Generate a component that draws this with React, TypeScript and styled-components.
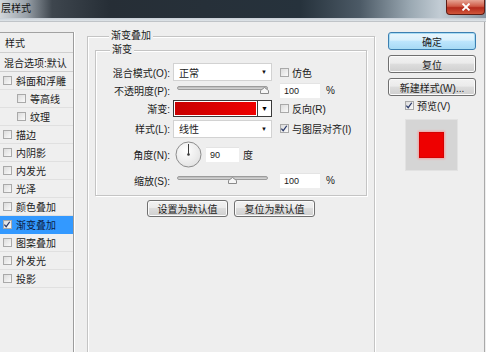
import styled, { createGlobalStyle } from "styled-components";

const GlobalStyle = createGlobalStyle`
  html, body {
    margin: 0;
    padding: 0;
    background: #eeeeee;
  }
  body {
    font-family: "Liberation Sans", "Noto Sans CJK SC", sans-serif;
    font-size: 10px;
    color: #1b1b1b;
  }
  * {
    box-sizing: border-box;
  }
`;

const effects = [
  { name: "斜面和浮雕", indent: 0 },
  { name: "等高线", indent: 1 },
  { name: "纹理", indent: 1 },
  { name: "描边", indent: 0 },
  { name: "内阴影", indent: 0 },
  { name: "内发光", indent: 0 },
  { name: "光泽", indent: 0 },
  { name: "颜色叠加", indent: 0 },
  { name: "渐变叠加", indent: 0, checked: true, selected: true },
  { name: "图案叠加", indent: 0 },
  { name: "外发光", indent: 0 },
  { name: "投影", indent: 0 },
];

function CheckBox({ checked }: { checked?: boolean }) {
  return (
    <Box>
      {checked && (
        <svg width="9" height="9" viewBox="0 0 9 9">
          <path d="M1.5 4.6 L3.6 7 L7.6 1.4" fill="none" stroke="#2a3a6a" strokeWidth="1.4" />
        </svg>
      )}
    </Box>
  );
}

function Slider({ percent }: { percent: number }) {
  return (
    <SliderWrap>
      <Track />
      <Thumb style={{ left: `${percent}%` }}>
        <svg width="9" height="7" viewBox="0 0 9 7">
          <path d="M0.5 6.5 V3.5 L4.5 0.5 L8.5 3.5 V6.5 Z" fill="#f6f6f6" stroke="#8a8a8a" />
        </svg>
      </Thumb>
    </SliderWrap>
  );
}

function Dial() {
  return (
    <svg width="27" height="27" viewBox="0 0 27 27">
      <defs>
        <radialGradient id="dialFill" cx="0.4" cy="0.35" r="0.7">
          <stop offset="0" stopColor="#ffffff" />
          <stop offset="1" stopColor="#e2e2e2" />
        </radialGradient>
      </defs>
      <circle cx="13.5" cy="13.5" r="12.5" fill="url(#dialFill)" stroke="#8c8c8c" />
      <line x1="13.5" y1="13.5" x2="13.5" y2="3" stroke="#3a3a3a" strokeWidth="1" />
      <circle cx="13.5" cy="13.5" r="1.3" fill="#3a3a3a" />
    </svg>
  );
}

export default function App() {
  return (
    <Window>
      <GlobalStyle />
      <TitleBar>
        <Title>层样式</Title>
        <CloseButton>
          <svg width="10" height="8" viewBox="0 0 10 8">
            <path d="M1.5 0.5 L8.5 7.5 M8.5 0.5 L1.5 7.5" stroke="#ffffff" strokeWidth="1.8" />
          </svg>
        </CloseButton>
      </TitleBar>
      <FrameEdge />
      <Body>
        <StylePanel>
          <PanelHead>样式</PanelHead>
          <BlendRow>混合选项:默认</BlendRow>
          {effects.map((e) => (
            <EffectRow key={e.name} $indent={e.indent} $selected={e.selected}>
              <CheckBox checked={e.checked} />
              <span>{e.name}</span>
            </EffectRow>
          ))}
        </StylePanel>

        <MainColumn>
          <Group $outer>
            <Legend>渐变叠加</Legend>
            <Group>
              <Legend>渐变</Legend>
              <FormGrid>
                <Label>混合模式(O):</Label>
                <Select>
                  <span>正常</span>
                  <Caret>▼</Caret>
                </Select>
                <Extra>
                  <CheckBox />
                  <span>仿色</span>
                </Extra>

                <Label>不透明度(P):</Label>
                <Slider percent={96} />
                <Extra>
                  <NumberField $w={40}>100</NumberField>
                  <Unit>%</Unit>
                </Extra>

                <Label>渐变:</Label>
                <GradientPicker>
                  <Swatch />
                  <SwatchDrop>▼</SwatchDrop>
                </GradientPicker>
                <Extra>
                  <CheckBox />
                  <span>反向(R)</span>
                </Extra>

                <Label>样式(L):</Label>
                <Select>
                  <span>线性</span>
                  <Caret>▼</Caret>
                </Select>
                <Extra>
                  <CheckBox checked />
                  <span>与图层对齐(I)</span>
                </Extra>

                <Label>角度(N):</Label>
                <AngleRow>
                  <Dial />
                  <NumberField $w={33}>90</NumberField>
                  <span>度</span>
                </AngleRow>
                <span />

                <Label>缩放(S):</Label>
                <Slider percent={60} />
                <Extra>
                  <NumberField $w={40}>100</NumberField>
                  <Unit>%</Unit>
                </Extra>
              </FormGrid>
            </Group>
            <DefaultsRow>
              <Button $w={81}>设置为默认值</Button>
              <Button $w={81}>复位为默认值</Button>
            </DefaultsRow>
          </Group>
        </MainColumn>

        <SideColumn>
          <Button $primary>确定</Button>
          <Button>复位</Button>
          <Button>新建样式(W)...</Button>
          <PreviewToggle>
            <CheckBox checked />
            <span>预览(V)</span>
          </PreviewToggle>
          <PreviewBox>
            <PreviewSwatch />
          </PreviewBox>
        </SideColumn>
      </Body>
    </Window>
  );
}

const Window = styled.div`
  width: 486px;
  height: 352px;
  overflow: hidden;
  display: flex;
  flex-direction: column;
  background: #eeeeee;
`;

const TitleBar = styled.div`
  height: 18px;
  flex: none;
  display: flex;
  align-items: flex-start;
  justify-content: space-between;
  background: linear-gradient(
    to right,
    #d2d6da 0px,
    #9aa2aa 26px,
    #3e464e 52px,
    #262e36 110px,
    #26323c 300px,
    #4c5a66 360px,
    #9aa8b2 410px,
    #c2ccd4 440px,
    #8894a0 486px
  );
`;

const Title = styled.div`
  padding: 2px 0 0 1px;
  line-height: 13px;
  color: #111;
`;

const CloseButton = styled.div`
  width: 39px;
  height: 15px;
  margin-right: 1px;
  display: flex;
  align-items: center;
  justify-content: center;
  border: 1px solid #5e1c14;
  border-top: none;
  border-radius: 0 0 4px 4px;
  background: linear-gradient(#e6a494, #cf5a46 45%, #b42a1c 55%, #d0563a);
`;

const FrameEdge = styled.div`
  height: 4px;
  flex: none;
  background: linear-gradient(#c6ced6, #dfe4e8);
  border-bottom: 1px solid #c0c4c8;
`;

const Body = styled.div`
  flex: 1;
  display: flex;
  align-items: flex-start;
  width: 485px;
  padding-top: 10px;
  border-right: 1px solid #a9a9a9;
`;

const StylePanel = styled.div`
  width: 74px;
  height: 340px;
  flex: none;
  border-top: 1px solid #a2a2a2;
  border-right: 1px solid #9c9c9c;
  box-shadow: 1px 0 0 #ffffff;
  background: #efefef;
`;

const PanelHead = styled.div`
  height: 20px;
  padding-left: 5px;
  display: flex;
  align-items: center;
  border-bottom: 1px solid #cfcfcf;
`;

const BlendRow = styled(PanelHead)`
  height: 19px;
  padding-left: 4px;
  white-space: nowrap;
`;

const EffectRow = styled.div<{ $indent: number; $selected?: boolean }>`
  height: 18px;
  display: flex;
  align-items: center;
  gap: 4px;
  padding-left: ${(p) => 3 + p.$indent * 14}px;
  border-bottom: 1px solid ${(p) => (p.$selected ? "#3399ff" : "#e0e0e0")};
  background: ${(p) => (p.$selected ? "#3399ff" : "transparent")};
  color: ${(p) => (p.$selected ? "#0c1c44" : "#1b1b1b")};
  white-space: nowrap;
`;

const Box = styled.span`
  width: 9px;
  height: 9px;
  flex: none;
  display: inline-flex;
  border: 1px solid #a9a9a9;
  background: linear-gradient(135deg, #dcdcdc, #fafafa);
  svg {
    margin: -1px 0 0 -1px;
  }
`;

const MainColumn = styled.div`
  width: 288px;
  flex: none;
  margin-left: 13px;
  padding-top: 4px;
`;

const Group = styled.div<{ $outer?: boolean }>`
  border: 1px solid #c4c4c4;
  box-shadow: inset 1px 1px 0 #ffffff, 1px 1px 0 #ffffff;
  padding: ${(p) => (p.$outer ? "0 7px" : "0 0 5px")};
  margin-top: ${(p) => (p.$outer ? 0 : 8)}px;
  height: ${(p) => (p.$outer ? "330px" : "auto")};
`;

const Legend = styled.div`
  width: fit-content;
  margin: -7px 0 0 14px;
  padding: 0 2px;
  line-height: 12px;
  background: #eeeeee;
`;

const FormGrid = styled.div`
  display: grid;
  grid-template-columns: 77px 107px 1fr;
  grid-template-rows: 18px 18px 19px 21px 31px 20px;
  align-items: center;
  margin-top: 7px;
`;

const Label = styled.div`
  text-align: right;
  padding-right: 3px;
  white-space: nowrap;
`;

const Select = styled.div`
  width: 99px;
  height: 18px;
  display: flex;
  align-items: center;
  justify-content: space-between;
  padding: 0 4px 0 5px;
  background: #ffffff;
  border: 1px solid #d2d2d2;
`;

const Caret = styled.span`
  font-size: 6px;
  color: #111;
`;

const Extra = styled.div`
  display: flex;
  align-items: center;
  gap: 3px;
  white-space: nowrap;
`;

const NumberField = styled.div<{ $w: number }>`
  width: ${(p) => p.$w}px;
  height: 15px;
  display: flex;
  align-items: center;
  padding-left: 4px;
  font-size: 9px;
  background: #ffffff;
  border-top: 1px solid #e4e4e4;
`;

const Unit = styled.span`
  margin-left: 3px;
`;

const SliderWrap = styled.div`
  position: relative;
  width: 91px;
  height: 10px;
  margin-left: 4px;
`;

const Track = styled.div`
  height: 4px;
  margin-top: 1px;
  border: 1px solid #9c9c9c;
  border-radius: 2px;
  background: linear-gradient(#b8b8b8, #d8d8d8);
`;

const Thumb = styled.div`
  position: absolute;
  top: 2px;
  width: 9px;
  height: 7px;
  margin-left: -4px;
  display: flex;
`;

const GradientPicker = styled.div`
  width: 99px;
  height: 17px;
  display: flex;
`;

const Swatch = styled.div`
  flex: 1;
  border: 1px solid #3a3a3a;
  box-shadow: inset 0 0 0 1px #ffffff;
  background: linear-gradient(to right, #c80000, #ee0000);
`;

const SwatchDrop = styled.div`
  width: 14px;
  display: flex;
  align-items: center;
  justify-content: center;
  font-size: 7px;
  color: #000;
  background: #ffffff;
  border: 1px solid #3a3a3a;
  border-left: none;
`;

const AngleRow = styled.div`
  display: flex;
  align-items: center;
  gap: 4px;
  white-space: nowrap;
  svg {
    margin-left: 2px;
  }
`;

const DefaultsRow = styled.div`
  display: flex;
  justify-content: center;
  gap: 6px;
  margin-top: 4px;
`;

const Button = styled.div<{ $w?: number; $primary?: boolean }>`
  width: ${(p) => (p.$w ? `${p.$w}px` : "100%")};
  height: ${(p) => (p.$w ? 17 : 18)}px;
  display: flex;
  align-items: center;
  justify-content: center;
  white-space: nowrap;
  border-radius: 3px;
  border: 1px solid ${(p) => (p.$primary ? "#3c7fb1" : "#707070")};
  box-shadow: inset 0 0 0 1px ${(p) => (p.$primary ? "#a8dcf4" : "#fbfbfb")};
  background: ${(p) =>
    p.$primary
      ? "linear-gradient(#eaf6fd, #d9f0fc 45%, #bee6fd 50%, #a7d9f5)"
      : "linear-gradient(#f2f2f2, #ebebeb 45%, #dddddd 50%, #cfcfcf)"};
`;

const SideColumn = styled.div`
  width: 88px;
  flex: none;
  margin-left: 13px;
  display: flex;
  flex-direction: column;
  gap: 5px;
`;

const PreviewToggle = styled.div`
  height: 12px;
  display: flex;
  align-items: center;
  gap: 3px;
  padding-left: 17px;
  margin-top: -2px;
`;

const PreviewBox = styled.div`
  width: 53px;
  height: 52px;
  margin: 3px 0 0 17px;
  display: flex;
  align-items: center;
  justify-content: center;
  background: #d5d5d5;
  border: 1px solid #e2e2e2;
`;

const PreviewSwatch = styled.div`
  width: 25px;
  height: 26px;
  background: #ee0000;
  border: 1px solid #d40000;
  box-shadow: 0 0 2px 1px #f5a0a0;
`;
